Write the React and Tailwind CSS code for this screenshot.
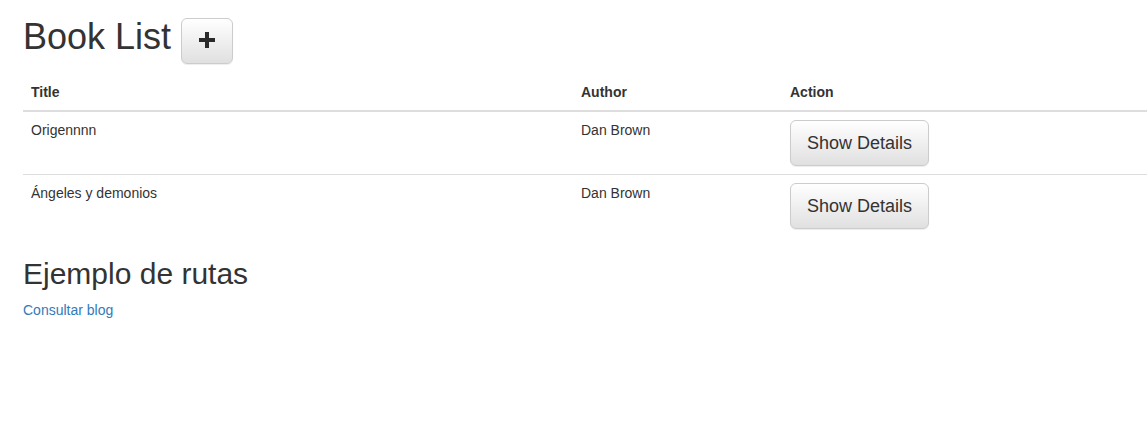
export default function App() {
    const books = [
        { title: "Origennnn", author: "Dan Brown" },
        { title: "Ángeles y demonios", author: "Dan Brown" },
    ];

    const btn =
        "rounded-[6px] border border-[#ccc] bg-gradient-to-b from-white to-[#e0e0e0] text-[#333] shadow-[inset_0_1px_0_rgba(255,255,255,0.15),0_1px_1px_rgba(0,0,0,0.075)]";

    return (
        <div className="min-h-screen bg-white pl-[23px] text-[14px] leading-[20px] text-[#333] font-['Liberation_Sans',Arial,sans-serif]">
            <div className="flex items-start">
                <h1 className="mt-[17px] text-[36px] leading-[40px] font-normal">Book List</h1>
                <button className={btn + " mt-[18px] ml-[10px] flex h-[46px] w-[52px] items-center justify-center"}>
                    <svg width="16" height="16" viewBox="0 0 16 16" className="-mt-[2px]">
                        <path d="M6 0h4v6h6v4h-6v6H6v-6H0V6h6z" fill="#2a2a2a" />
                    </svg>
                </button>
            </div>

            <table className="mt-[10px] w-full table-fixed border-collapse">
                <thead>
                    <tr className="border-b-2 border-[#ddd]">
                        <th className="w-[550px] p-[8px] text-left font-bold">Title</th>
                        <th className="w-[209px] p-[8px] text-left font-bold">Author</th>
                        <th className="p-[8px] text-left font-bold">Action</th>
                    </tr>
                </thead>
                <tbody>
                    {books.map((b, i) => (
                        <tr key={i} className="border-t border-[#ddd]">
                            <td className="p-[8px] align-top">{b.title}</td>
                            <td className="p-[8px] align-top">{b.author}</td>
                            <td className="p-[8px] align-top">
                                <button className={btn + " h-[46px] px-[16px] text-[18px] leading-[24px]"}>
                                    Show Details
                                </button>
                            </td>
                        </tr>
                    ))}
                </tbody>
            </table>

            <h2 className="mt-[20px] mb-[10px] text-[30px] leading-[33px] font-normal">Ejemplo de rutas</h2>
            <a href="#" className="text-[#337ab7]">Consultar blog</a>
        </div>
    );
}
